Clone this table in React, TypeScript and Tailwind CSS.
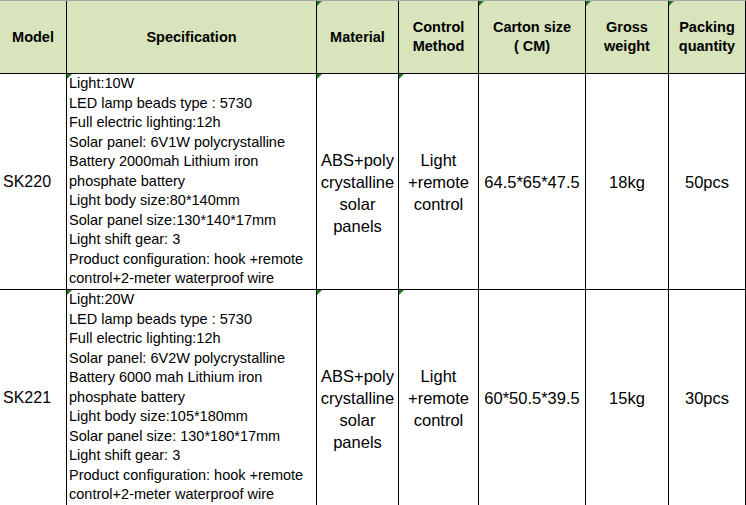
import React from 'react';

type Product = {
  model: string;
  spec: string[];
  material: string[];
  control: string[];
  carton: string;
  weight: string;
  packing: string;
};

const products: Product[] = [
  {
    model: 'SK220',
    spec: [
      'Light:10W',
      'LED lamp beads type : 5730',
      'Full electric lighting:12h',
      'Solar panel: 6V1W polycrystalline',
      'Battery 2000mah Lithium iron',
      'phosphate battery',
      'Light body size:80*140mm',
      'Solar panel size:130*140*17mm',
      'Light shift gear: 3',
      'Product configuration: hook +remote',
      'control+2-meter waterproof wire',
    ],
    material: ['ABS+poly', 'crystalline', 'solar', 'panels'],
    control: ['Light', '+remote', 'control'],
    carton: '64.5*65*47.5',
    weight: '18kg',
    packing: '50pcs',
  },
  {
    model: 'SK221',
    spec: [
      'Light:20W',
      'LED lamp beads type : 5730',
      'Full electric lighting:12h',
      'Solar panel: 6V2W polycrystalline',
      'Battery 6000 mah Lithium iron',
      'phosphate battery',
      'Light body size:105*180mm',
      'Solar panel size: 130*180*17mm',
      'Light shift gear: 3',
      'Product configuration: hook +remote',
      'control+2-meter waterproof wire',
    ],
    material: ['ABS+poly', 'crystalline', 'solar', 'panels'],
    control: ['Light', '+remote', 'control'],
    carton: '60*50.5*39.5',
    weight: '15kg',
    packing: '30pcs',
  },
];

// little green corner marks, like Excel's error indicator
function Flag() {
  return (
    <span className="absolute left-0 top-0 w-0 h-0 border-t-[5px] border-r-[5px] border-t-[#1f7a1f] border-r-transparent" />
  );
}

function HeadCell({ w, lines, flag }: { w: string; lines: string[]; flag?: boolean }) {
  return (
    <div className={`relative ${w} shrink-0 border-r border-black flex flex-col items-center justify-center text-center`}>
      {flag && <Flag />}
      {lines.map((l) => (
        <span key={l} className="leading-[19px]">{l}</span>
      ))}
    </div>
  );
}

function Cell({ w, children, flag, extra = '' }: { w: string; children: React.ReactNode; flag?: boolean; extra?: string }) {
  return (
    <div className={`relative ${w} shrink-0 border-r border-black flex flex-col items-center justify-center text-center text-[16.5px] leading-[22px] ${extra}`}>
      {flag && <Flag />}
      {children}
    </div>
  );
}

export default function App() {
  return (
    <div className="w-[746px] h-[505px] overflow-hidden bg-white text-black" style={{ fontFamily: '"Liberation Sans", Arial, sans-serif' }}>
      {/* header row */}
      <div className="flex h-[74px] bg-[#d8e4bc] border-t border-[#a6a6a6] border-b border-b-black font-bold text-[14.5px]">
        <HeadCell w="w-[67px]" lines={['Model']} />
        <HeadCell w="w-[250px]" lines={['Specification']} />
        <HeadCell w="w-[82px]" lines={['Material']} flag />
        <HeadCell w="w-[80px]" lines={['Control', 'Method']} />
        <HeadCell w="w-[107px]" lines={['Carton size', '( CM)']} flag />
        <HeadCell w="w-[83px]" lines={['Gross', 'weight']} flag />
        <HeadCell w="w-[77px]" lines={['Packing', 'quantity']} flag />
      </div>

      {products.map((p) => (
        <div key={p.model} className="flex h-[216px] border-b border-black">
          <div className="w-[67px] shrink-0 border-r border-black flex items-center pl-[3px] text-[16px]">
            {p.model}
          </div>
          <div className="relative w-[250px] shrink-0 border-r border-black pl-[2px] text-[14.5px] leading-[19.5px] whitespace-nowrap">
            <Flag />
            {p.spec.map((s, i) => (
              <div key={i}>{s}</div>
            ))}
          </div>
          <Cell w="w-[82px]" flag extra="pt-[22px]">
            {p.material.map((m) => (
              <span key={m}>{m}</span>
            ))}
          </Cell>
          <Cell w="w-[80px]" flag>
            {p.control.map((c) => (
              <span key={c}>{c}</span>
            ))}
          </Cell>
          <Cell w="w-[107px]">{p.carton}</Cell>
          <Cell w="w-[83px]">{p.weight}</Cell>
          <Cell w="w-[77px]">{p.packing}</Cell>
        </div>
      ))}
    </div>
  );
}
